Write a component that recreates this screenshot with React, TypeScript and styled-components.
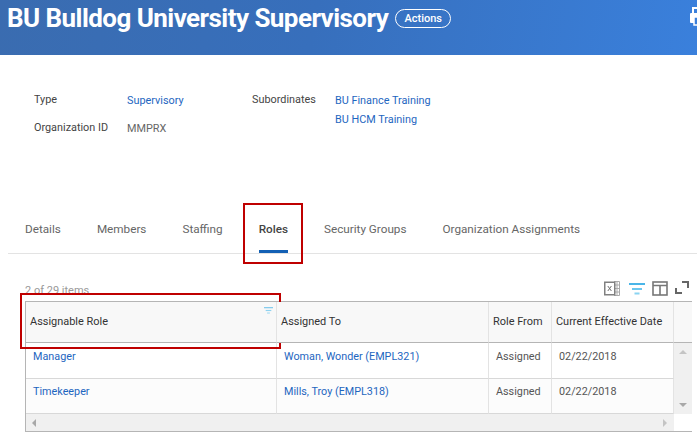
import React from "react";
import styled, { createGlobalStyle } from "styled-components";

const GlobalStyle = createGlobalStyle`
  html, body {
    margin: 0;
    padding: 0;
    background: #fff;
    font-family: Roboto, "Liberation Sans", sans-serif;
  }
`;

const columns = "251px 212px 63px 122px 18px";

const rows = [
  { role: "Manager", person: "Woman, Wonder (EMPL321)", from: "Assigned", date: "02/22/2018" },
  { role: "Timekeeper", person: "Mills, Troy (EMPL318)", from: "Assigned", date: "02/22/2018" },
];

const tabs = ["Details", "Members", "Staffing", "Roles", "Security Groups", "Organization Assignments"];

const FilterIcon = ({ width, height }: { width: number; height: number }) => (
  <svg width={width} height={height} viewBox="0 0 16 12" fill="none">
    <rect x="0" y="0" width="16" height="2" fill="#4ab5e8" />
    <rect x="3" y="5" width="10" height="2" fill="#6cc6ee" />
    <rect x="5.5" y="9.5" width="5" height="2" fill="#8ad4f2" />
  </svg>
);

const App = () => {
  return (
    <Page>
      <GlobalStyle />
      <Header>
        <Title>BU Bulldog University Supervisory</Title>
        <ActionsButton>Actions</ActionsButton>
        <PrintIcon width="16" height="22" viewBox="0 0 16 22">
          <rect x="3" y="2" width="10" height="6" fill="none" stroke="#fff" strokeWidth="2" />
          <rect x="0" y="7" width="16" height="10" rx="1" fill="#fff" />
          <rect x="4" y="11" width="8" height="8" fill="#3a7fda" stroke="#fff" strokeWidth="1.5" />
        </PrintIcon>
      </Header>

      <Info>
        <InfoGrid>
          <Label>Type</Label>
          <LinkValue>Supervisory</LinkValue>
          <Label>Organization ID</Label>
          <PlainValue>MMPRX</PlainValue>
        </InfoGrid>
        <Subordinates>
          <Label>Subordinates</Label>
          <LinkList>
            <LinkValue>BU Finance Training</LinkValue>
            <LinkValue>BU HCM Training</LinkValue>
          </LinkList>
        </Subordinates>
      </Info>

      <TabBar>
        {tabs.map((tab) => (
          <Tab key={tab} $active={tab === "Roles"}>
            {tab}
            {tab === "Roles" && <TabHighlight />}
          </Tab>
        ))}
      </TabBar>

      <Toolbar>
        <Count>2 of 29 items</Count>
        <ToolIcons>
          <ExcelIcon width="16" height="15" viewBox="0 0 16 15" fill="none">
            <path d="M10 0.5h5.5v14H10M11 4h4.5M11 7.5h4.5M11 11h4.5M13 0.5v14" stroke="#aaa" />
            <rect x="0.75" y="1.25" width="10" height="12.5" stroke="#808080" strokeWidth="1.5" fill="#fff" />
            <path d="M3.8 5l3.6 5M7.4 5l-3.6 5" stroke="#707070" />
          </ExcelIcon>
          <FilterIcon width={16} height={12} />
          <svg width="16" height="15" viewBox="0 0 16 15" fill="none">
            <rect x="1" y="1" width="14" height="13" stroke="#777" strokeWidth="1.6" />
            <path d="M1 4.5h14M8 4.5V14" stroke="#777" strokeWidth="1.6" />
          </svg>
          <ExpandIcon width="14" height="13" viewBox="0 0 14 13" fill="none">
            <path d="M7 1h6v6M1 7v5h6" stroke="#666" strokeWidth="2" />
          </ExpandIcon>
        </ToolIcons>
      </Toolbar>

      <Table>
        <HeaderCell>
          <span>Assignable Role</span>
          <HeaderFilter>
            <FilterIcon width={9} height={7} />
          </HeaderFilter>
          <HeaderHighlight />
        </HeaderCell>
        <HeaderCell>Assigned To</HeaderCell>
        <HeaderCell>Role From</HeaderCell>
        <HeaderCell>Current Effective Date</HeaderCell>
        <HeaderCorner />

        {rows.map((row, i) => (
          <React.Fragment key={row.role}>
            <BodyCell $striped={i === 1}>
              <CellLink>{row.role}</CellLink>
            </BodyCell>
            <BodyCell $striped={i === 1}>
              <CellLink>{row.person}</CellLink>
            </BodyCell>
            <BodyCell $striped={i === 1}>{row.from}</BodyCell>
            <BodyCell $striped={i === 1}>{row.date}</BodyCell>
            <VerticalTrack>
              {i === 0 ? <ArrowUp /> : <ArrowDown />}
            </VerticalTrack>
          </React.Fragment>
        ))}

        <HorizontalTrack>
          <ArrowLeft />
          <ArrowRight />
        </HorizontalTrack>
        <TrackCorner />
      </Table>
    </Page>
  );
};

export default App;

const Page = styled.div`
  width: 697px;
  height: 437px;
  overflow: hidden;
  position: relative;
`;

const Header = styled.header`
  height: 55px;
  display: flex;
  align-items: flex-start;
  gap: 7px;
  padding: 3px 0 0 7px;
  box-sizing: border-box;
  position: relative;
  background: linear-gradient(100deg, #3a6cb0 0%, #376fbc 45%, #3a80dc 100%);
`;

const Title = styled.h1`
  margin: 0;
  font-size: 26px;
  letter-spacing: -0.55px;
  line-height: 30px;
  font-weight: 700;
  color: #fff;
  white-space: nowrap;
`;

const ActionsButton = styled.button`
  margin-top: 6px;
  width: 56px;
  height: 19px;
  padding: 0;
  border: 1px solid #fff;
  border-radius: 10px;
  background: transparent;
  color: #fff;
  font-family: inherit;
  font-size: 11px;
  font-weight: 500;
`;

const PrintIcon = styled.svg`
  position: absolute;
  left: 690px;
  top: 6px;
`;

const Info = styled.section`
  height: 150px;
  box-sizing: border-box;
  padding: 38px 0 0 34px;
  display: flex;
  font-size: 10.85px;
  color: #444;
`;

const InfoGrid = styled.div`
  display: grid;
  grid-template-columns: 93px 125px;
  grid-auto-rows: 28px;
`;

const Label = styled.div`
  line-height: 14px;
  color: #444;
  white-space: nowrap;
`;

const LinkValue = styled.div`
  line-height: 14px;
  padding-top: 1px;
  color: #1e66bf;
  white-space: nowrap;
`;

const PlainValue = styled.div`
  line-height: 14px;
  padding-top: 1px;
  color: #666;
`;

const Subordinates = styled.div`
  display: grid;
  grid-template-columns: 83px auto;
  align-items: start;
`;

const LinkList = styled.div`
  display: flex;
  flex-direction: column;
  gap: 4px;
`;

const TabBar = styled.nav`
  margin-left: 8px;
  height: 49px;
  padding-left: 17px;
  box-sizing: border-box;
  display: flex;
  gap: 36px;
  border-bottom: 1px solid #e3e3e3;
`;

const Tab = styled.div<{ $active?: boolean }>`
  position: relative;
  height: 48px;
  line-height: 48px;
  font-size: 11.72px;
  font-weight: ${(p) => (p.$active ? 500 : 400)};
  color: ${(p) => (p.$active ? "#444" : "#666")};
  white-space: nowrap;
  box-sizing: border-box;
  border-bottom: 3px solid ${(p) => (p.$active ? "#1360b4" : "transparent")};
`;

const TabHighlight = styled.span`
  position: absolute;
  left: -16px;
  right: -15px;
  top: -2px;
  height: 61px;
  box-sizing: border-box;
  border: 2px solid #bf0000;
`;

const Toolbar = styled.div`
  height: 47px;
  box-sizing: border-box;
  padding: 26px 8px 0 25px;
  display: flex;
  justify-content: space-between;
  align-items: flex-start;
`;

const Count = styled.div`
  font-size: 11px;
  line-height: 22px;
  height: 22px;
  color: #999;
`;

const ToolIcons = styled.div`
  display: flex;
  align-items: center;
  gap: 7px;
  padding-top: 1px;
`;

const ExcelIcon = styled.svg`
  margin-right: 2px;
`;

const ExpandIcon = styled.svg`
  margin-top: -2px;
`;

const Table = styled.div`
  margin-left: 25px;
  width: 667px;
  box-sizing: border-box;
  border: 1px solid #b5b5b5;
  display: grid;
  grid-template-columns: ${columns};
  grid-template-rows: 41px 36px 35px 17px;
  font-size: 10.8px;
`;

const HeaderCell = styled.div`
  position: relative;
  display: flex;
  align-items: center;
  padding: 0 0 2px 4px;
  box-sizing: border-box;
  background: #f8f8f8;
  border-right: 1px solid #e3e3e3;
  border-bottom: 1px solid #b5b5b5;
  color: #333;
  font-size: 10.95px;
  white-space: nowrap;
`;

const HeaderFilter = styled.span`
  position: absolute;
  right: 3px;
  top: 5px;
  display: flex;
  opacity: 0.75;
`;

const HeaderHighlight = styled.span`
  position: absolute;
  left: -6px;
  top: -9px;
  width: 261px;
  height: 56px;
  box-sizing: border-box;
  border: 2px solid #bf0000;
`;

const HeaderCorner = styled.div`
  background: #f8f8f8;
  border-bottom: 1px solid #b5b5b5;
`;

const BodyCell = styled.div<{ $striped?: boolean }>`
  padding: ${(p) => (p.$striped ? "6px" : "7px")} 0 0 7px;
  box-sizing: border-box;
  line-height: 14px;
  color: #555;
  background: ${(p) => (p.$striped ? "#fcfcfc" : "#fff")};
  border-right: 1px solid #e3e3e3;
  border-bottom: 1px solid #d8d8d8;
  white-space: nowrap;
`;

const CellLink = styled.span`
  color: #1e66bf;
`;

const VerticalTrack = styled.div`
  background: #f0f0f0;
  position: relative;
`;

const ArrowUp = styled.span`
  position: absolute;
  left: 5px;
  top: 7px;
  border-left: 4px solid transparent;
  border-right: 4px solid transparent;
  border-bottom: 4px solid #c4c4c4;
`;

const ArrowDown = styled.span`
  position: absolute;
  left: 5px;
  bottom: 7px;
  border-left: 4px solid transparent;
  border-right: 4px solid transparent;
  border-top: 4px solid #a8a8a8;
`;

const HorizontalTrack = styled.div`
  grid-column: 1 / 5;
  background: #f0f0f0;
  display: flex;
  align-items: center;
  justify-content: space-between;
  padding: 0 7px 0 6px;
`;

const ArrowLeft = styled.span`
  border-top: 4px solid transparent;
  border-bottom: 4px solid transparent;
  border-right: 4px solid #a8a8a8;
`;

const ArrowRight = styled.span`
  border-top: 4px solid transparent;
  border-bottom: 4px solid transparent;
  border-left: 4px solid #c4c4c4;
`;

const TrackCorner = styled.div`
  background: #fff;
`;
